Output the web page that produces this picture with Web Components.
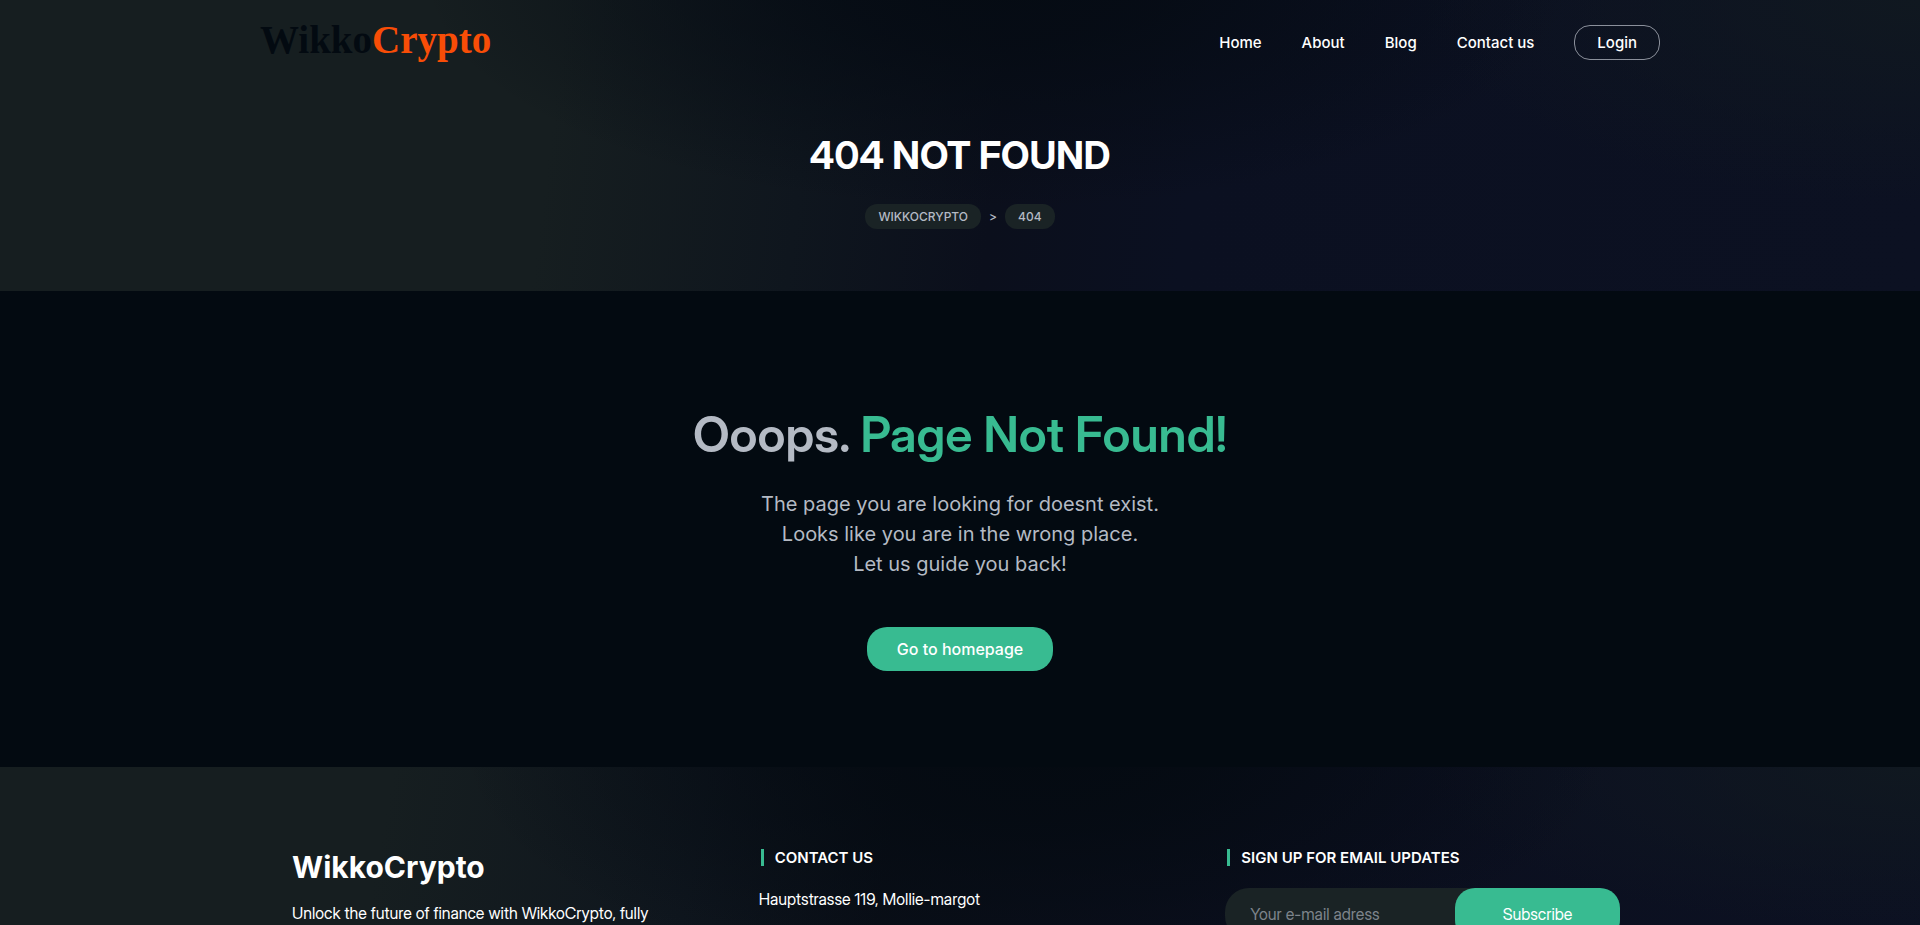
<!DOCTYPE html>
<html lang="en">
<head>
<meta charset="utf-8">
<meta name="viewport" content="width=device-width, initial-scale=1">
<title>404 Not Found - WikkoCrypto</title>
<style>
  html { background: #020910; }
  body {
    margin: 0;
    font-family: Inter, "Noto Sans", sans-serif;
    color: #fff;
    --display: "Inter Display", Inter, sans-serif;
    --ink: #030a11;
    --accent: #38bb91;
    --muted: #b4bac4;
    --pill: #1a2325;
    --orange: #f84d07;
    --wrap: 1400px;
  }
</style>
</head>
<body>
<wk-page></wk-page>
<script>
const define = (name, html) => {
  const template = document.createElement('template');
  template.innerHTML = html;
  customElements.define(name, class extends HTMLElement {
    constructor() {
      super();
      this.attachShadow({ mode: 'open' }).append(template.content.cloneNode(true));
    }
  });
};

define('wk-logo', `
<style>
  :host { display: block; padding-bottom: 6px; }
  a { font: bold 39px/44px "Liberation Serif", serif; color: var(--ink); text-decoration: none; }
  span { color: var(--orange); }
</style>
<a href="#">Wikko<span>Crypto</span></a>`);

define('wk-nav', `
<style>
  :host { display: block; }
  nav { display: flex; align-items: center; gap: 40px; }
  ::slotted(a) { font-size: 15px; line-height: 20px; font-weight: 500; color: #fff; text-decoration: none; }
  ::slotted(a.login) { border: 1px solid #8b909b; border-radius: 16px; padding: 7px 22px 6px; }
</style>
<nav><slot></slot></nav>`);

define('wk-header', `
<style>
  :host { display: block; }
  header { box-sizing: border-box; max-width: var(--wrap); min-height: 85px; margin: 0 auto; display: flex; align-items: center; justify-content: space-between; }
</style>
<header>
  <wk-logo></wk-logo>
  <wk-nav>
    <a href="#">Home</a><a href="#">About</a><a href="#">Blog</a><a href="#">Contact us</a><a class="login" href="#">Login</a>
  </wk-nav>
</header>`);

define('wk-crumbs', `
<style>
  :host { display: block; }
  nav { display: flex; justify-content: center; align-items: center; gap: 8px; font-size: 12px; line-height: 17px; font-weight: 500; color: var(--muted); }
  a, b { font-weight: 500; color: inherit; text-decoration: none; background: var(--pill); border-radius: 12px; padding: 4px 13px; text-transform: uppercase; }
</style>
<nav aria-label="Breadcrumb"><a href="#">WikkoCrypto</a><span>&gt;</span><b>404</b></nav>`);

define('wk-hero', `
<style>
  :host {
    display: block;
    background:
      radial-gradient(ellipse 30% 80% at 52% -8%, #050b13 0%, #050b13cc 30%, #050b1300 100%),
      radial-gradient(ellipse 26% 70% at 100% 0%, #101820 0%, #10182000 100%),
      linear-gradient(97deg, #161e20 0%, #161e20 29%, #0f161e 42%, #0b0f1c 52%, #0b1021 62%, #0c1122 100%);
  }
  h1 { margin: 0; padding-top: 45px; text-align: center; font: 700 38px/50px var(--display); }
  wk-crumbs { padding: 24px 0 62px; }
</style>
<wk-header></wk-header>
<h1>404 NOT FOUND</h1>
<wk-crumbs></wk-crumbs>`);

define('wk-missing', `
<style>
  :host { display: block; background: var(--ink); color: var(--muted); text-align: center; padding: 114px 0 96px; }
  h2 { margin: 0; font: 600 49px/60px var(--display); }
  h2 span { color: var(--accent); }
  p { margin: 24px 0 48px; font-size: 20px; line-height: 30px; }
  a { display: inline-block; vertical-align: top; background: var(--accent); color: #fff; text-decoration: none; font-size: 16px; line-height: 24px; font-weight: 500; padding: 10px 30px; border-radius: 20px; }
</style>
<h2>Ooops. <span>Page Not Found!</span></h2>
<p>The page you are looking for doesnt exist.<br>Looks like you are in the wrong place.<br>Let us guide you back!</p>
<a href="#">Go to homepage</a>`);

define('wk-footer-title', `
<style>
  :host { display: block; margin: 0 0 22px 2px; }
  h4 { margin: 0; border-left: 3px solid var(--accent); padding-left: 11px; font-size: 15px; line-height: 17px; font-weight: 600; text-transform: uppercase; }
</style>
<h4><slot></slot></h4>`);

define('wk-subscribe', `
<style>
  :host { display: block; }
  form { display: flex; background: var(--pill); border-radius: 24px; }
  input { box-sizing: border-box; flex: 1; min-width: 0; height: 52px; border: 0; outline: 0; background: none; padding: 0 8px 0 25px; font: 400 16px/24px var(--display); color: #fff; }
  input::placeholder { color: #7d848b; opacity: 1; }
  button { width: 165px; border: 0; border-radius: 20px; background: var(--accent); color: #fff; font: 400 16px/24px var(--display); }
</style>
<form>
  <input type="email" placeholder="Your e-mail adress" aria-label="Your e-mail adress">
  <button type="button">Subscribe</button>
</form>`);

define('wk-footer', `
<style>
  :host {
    display: block;
    background:
      radial-gradient(ellipse 30% 90% at 54% -8%, #040a11 0%, #040a11cc 30%, #040a1100 100%),
      radial-gradient(ellipse 26% 60% at 100% 0%, #101820 0%, #10182000 100%),
      linear-gradient(100deg, #161e20 0%, #161e20 20%, #0f161e 36%, #0a0f18 46%, #0b0f1f 66%, #0c1122 100%);
  }
  footer { max-width: var(--wrap); margin: 0 auto; padding: 82px 0 100px; display: grid; grid-template-columns: repeat(3, minmax(0, 1fr)); }
  section { padding: 0 40px 0 32px; }
  h3 { margin: 0 0 17px; font: 700 30px/36px Inter, sans-serif; }
  p { margin: 0; font: 400 16px/22px var(--display); }
</style>
<footer>
  <section><h3>WikkoCrypto</h3><p>Unlock the future of finance with WikkoCrypto, fully</p></section>
  <section><wk-footer-title>Contact us</wk-footer-title><p>Hauptstrasse 119, Mollie-margot</p></section>
  <section><wk-footer-title>Sign up for email updates</wk-footer-title><wk-subscribe></wk-subscribe></section>
</footer>`);

define('wk-page', `
<style>
  :host { display: block; height: 100vh; overflow: hidden; }
</style>
<wk-hero></wk-hero>
<main><wk-missing></wk-missing></main>
<wk-footer></wk-footer>`);
</script>
</body>
</html>
